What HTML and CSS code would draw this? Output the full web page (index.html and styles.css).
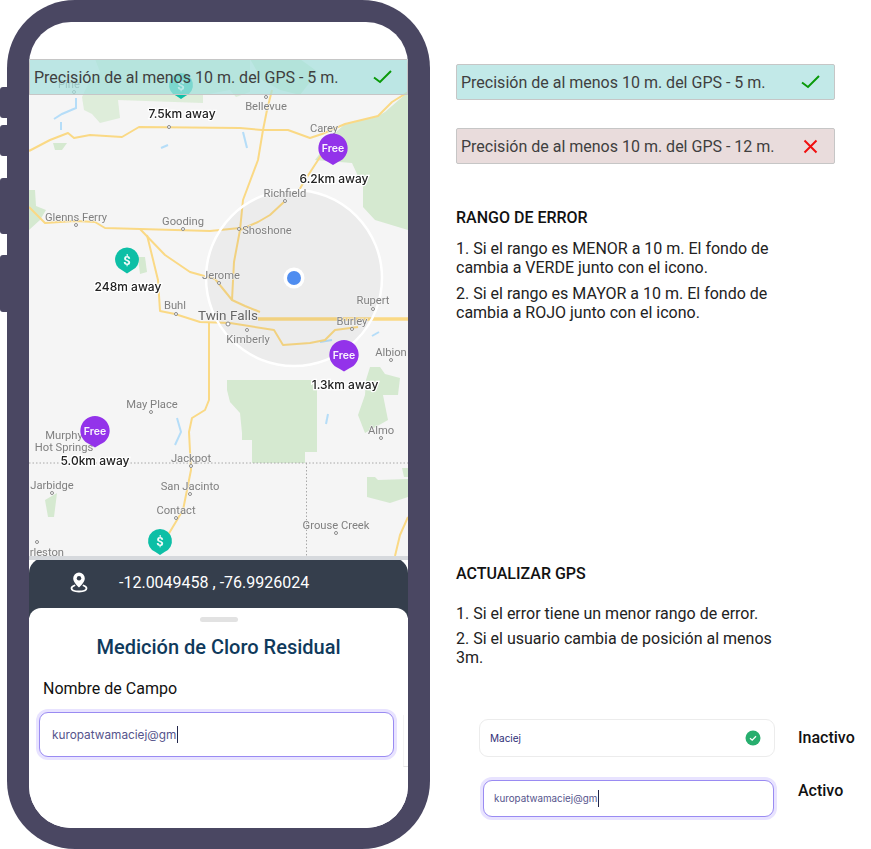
FILE: index.html
```html
<!DOCTYPE html>
<html lang="es">
<head>
<meta charset="utf-8">
<title>Precisión GPS</title>
<link rel="stylesheet" href="styles.css">
</head>
<body>
<div class="page">
  <section class="phone">
    <span class="side-btn side-a"></span>
    <span class="side-btn side-b"></span>
    <span class="side-btn side-c"></span>
    <span class="side-btn side-d"></span>
    <div class="screen">
      <div class="status-space"></div>
      <div class="map">
        <svg class="map-svg" viewBox="29 59 379 501" width="379" height="501">
          <rect x="29" y="59" width="379" height="501" fill="#f5f5f5"/>
          <g fill="#d5e9d0">
            <path d="M29 59H95L100 72L88 84L82 97L84 110L92 114L100 123L120 118L118 100L203 103V95L230 90L236 97L250 92V59Z" opacity=".75"/>
            <path d="M250 59H300L318 72L300 95L280 90L262 80Z"/>
            <path d="M408 92L385 112L378 116L345 124L335 133L315 160L352 163L363 187L363 207L375 220L408 230Z"/>
            <path d="M29 190H35L36 206L46 210L40 220L29 230Z"/>
            <path d="M53 143H67L62 150H55Z"/>
            <path d="M138 257H145L147 272L140 274Z"/>
            <path d="M227 380H317V452H305V463H252V440H242V433L240 413L230 402L227 390Z"/>
            <path d="M370 367H380L385 374L400 378L398 395H383L388 420L365 433L358 415L365 395L366 380Z"/>
            <path d="M367 477H375L378 480L408 479V497L390 503L367 497Z"/>
            <path d="M402 468H408V477H404Z"/>
            <path d="M45 500L57 493L54 517H48Z"/>
          </g>
          <g fill="none" stroke="#b5ddf8" stroke-width="2">
            <path d="M76 98L76 108L62 114L54 119"/>
            <path d="M61 122V130"/>
            <path d="M243 132L247 148"/>
            <path d="M161 148L168 145"/>
            <path d="M177 418L181 432L175 445"/>
            <path d="M328 414L326 424"/>
            <path d="M320 342L332 340M372 336L379 332"/>
          </g>
          <g fill="none" stroke="#fad985" stroke-width="2" stroke-linejoin="round">
            <path d="M29 151L50 140L68 133L74 138L90 135L122 137L139 127L240 128L262 130L288 130L310 138L322 134L345 124L378 116L392 102L408 92"/>
            <path d="M272 90L267 110L263 130L258 160L243 200L240 230L234 262L232 300"/>
            <path d="M29 207L45 223L75 221L95 222L105 228L140 229L210 231L240 228"/>
            <path d="M140 229L165 255L190 272L215 279L232 300L245 306L260 312"/>
            <path d="M147 235L158 280L160 311L175 314L200 322L230 323L274 330L283 345L310 343L325 340L335 330L358 327"/>
            <path d="M209 322V400L205 410L192 418L189 432L191 470L183 510L165 540"/>
            <path d="M408 517L400 535L395 556"/>
            <path d="M285 201L270 215L258 222L240 230"/>
            <path d="M322 154L305 180L298 192"/>
          </g>
          <path d="M258 319H408" fill="none" stroke="#fad985" stroke-width="3.500"/>
          <path d="M29 463H408M306.500 463V556" fill="none" stroke="#a8a8a8" stroke-width="1" stroke-dasharray="1.500 2"/>

          <circle cx="294" cy="278" r="88" fill="#000" fill-opacity=".035" stroke="#fff" stroke-width="2.500"/>

          <g fill="#fff" stroke="#8a8a8a" stroke-width="1">
            <circle cx="74" cy="92" r="1.500"/><circle cx="169" cy="127" r="1.500"/><circle cx="266" cy="97" r="1.500"/>
            <circle cx="285" cy="201" r="1.500"/><circle cx="76" cy="225" r="1.500"/><circle cx="183" cy="229" r="1.500"/>
            <circle cx="239" cy="229" r="1.500"/><circle cx="219" cy="283" r="1.500"/><circle cx="176" cy="314" r="1.500"/>
            <circle cx="228" cy="324" r="2"/><circle cx="247" cy="330" r="1.500"/><circle cx="373" cy="309" r="1.500"/>
            <circle cx="352" cy="329" r="1.500"/><circle cx="391" cy="360" r="1.500"/><circle cx="151" cy="412" r="1.500"/>
            <circle cx="381" cy="438" r="1.500"/><circle cx="191" cy="466" r="1.500"/><circle cx="52" cy="493" r="1.500"/>
            <circle cx="190" cy="494" r="1.500"/><circle cx="176" cy="518" r="1.500"/><circle cx="336" cy="533" r="1.500"/><circle cx="37" cy="542" r="1.500"/>
          </g>
          <g class="place">
            <text x="69" y="88">Pine</text>
            <text x="266" y="110">Bellevue</text>
            <text x="324" y="132">Carey</text>
            <text x="285" y="197">Richfield</text>
            <text x="76" y="221">Glenns Ferry</text>
            <text x="183" y="225">Gooding</text>
            <text x="267" y="234">Shoshone</text>
            <text x="221" y="279">Jerome</text>
            <text x="175" y="309">Buhl</text>
            <text x="373" y="304">Rupert</text>
            <text x="352" y="325">Burley</text>
            <text x="248" y="343">Kimberly</text>
            <text x="391" y="356">Albion</text>
            <text x="152" y="408">May Place</text>
            <text x="64" y="439">Murphy</text>
            <text x="64" y="451">Hot Springs</text>
            <text x="191" y="462">Jackpot</text>
            <text x="381" y="434">Almo</text>
            <text x="52" y="489">Jarbidge</text>
            <text x="190" y="490">San Jacinto</text>
            <text x="176" y="514">Contact</text>
            <text x="336" y="529">Grouse Creek</text>
            <text class="place-end" x="64" y="556">Charleston</text>
            <text class="place-big" x="228" y="320">Twin Falls</text>
          </g>

          <circle cx="294" cy="278" r="10.500" fill="#fff"/>
          <circle cx="294" cy="278" r="7" fill="#4f8df0"/>

          <g class="pin-free">
            <path d="M333 133.500a14.700 14.700 0 0 1 5 28.500l-5 3-5-3a14.700 14.700 0 0 1 5-28.500Z"/>
            <path d="M344 340a14.700 14.700 0 0 1 5 28.500l-5 3-5-3a14.700 14.700 0 0 1 5-28.500Z"/>
            <path d="M95 416a14.700 14.700 0 0 1 5 28.500l-5 3-5-3a14.700 14.700 0 0 1 5-28.500Z"/>
          </g>
          <g class="pin-paid">
            <path d="M181 73a12 12 0 0 1 4.500 23.100l-4.500 3-4.500-3a12 12 0 0 1 4.500-23.100Z"/>
            <path d="M127 247.500a12 12 0 0 1 4.500 23.100l-4.500 3-4.500-3a12 12 0 0 1 4.500-23.100Z"/>
            <path d="M160 529a12 12 0 0 1 4.500 23.100l-4.500 3-4.500-3a12 12 0 0 1 4.500-23.100Z"/>
          </g>
          <g class="pin-label">
            <text x="333" y="152">Free</text>
            <text x="344" y="358.500">Free</text>
            <text x="95" y="434.500">Free</text>
            <text class="dollar" x="181" y="90">$</text>
            <text class="dollar" x="127" y="264.500">$</text>
            <text class="dollar" x="160" y="546">$</text>
          </g>
          <g class="away">
            <text x="182" y="118">7.5km away</text>
            <text x="334" y="183">6.2km away</text>
            <text x="128" y="291">248m away</text>
            <text x="345" y="389">1.3km away</text>
            <text x="95" y="465">5.0km away</text>
          </g>
          <rect x="29" y="556" width="379" height="4" fill="#d6d9dd"/>
        </svg>
        <div class="banner banner-overlay">
          <span>Precisión de al menos 10 m. del GPS - 5 m.</span>
          <svg class="mark" width="19" height="14" viewBox="0 0 19 14"><path d="M1 7.500L7 12L18 1" fill="none" stroke="#0a9a0a" stroke-width="2"/></svg>
        </div>
      </div>
      <div class="coords">
        <svg class="coords-icon" width="18" height="22" viewBox="0 0 18 22">
          <path d="M9 1.500a5.800 5.800 0 0 0-5.800 5.800C3.200 11 7 14.500 9 16.500c2-2 5.800-5.500 5.800-9.200A5.800 5.800 0 0 0 9 1.500Z" fill="#fff"/>
          <circle cx="9" cy="7.300" r="2.200" fill="#353e4c"/>
          <path d="M4.500 14.500C2.500 15.200 1.500 16.200 1.500 17.300 1.500 19.200 5 20.500 9 20.500S16.500 19.200 16.500 17.300C16.500 16.200 15.500 15.200 13.500 14.500" fill="none" stroke="#fff" stroke-width="1.800" stroke-linecap="round"/>
        </svg>
        <span class="coords-text">-12.0049458 , -76.9926024</span>
      </div>
      <div class="sheet">
        <span class="handle"></span>
        <h1 class="sheet-title">Medición de Cloro Residual</h1>
        <p class="sheet-label">Nombre de Campo</p>
        <div class="field field-active field-phone"><span class="field-text field-text-phone">kuropatwamaciej@gm</span><span class="caret"></span></div>
        <span class="sheet-edge"></span>
      </div>
    </div>
  </section>

  <section class="notes">
    <div class="banner banner-ok">
      <span>Precisión de al menos 10 m. del GPS - 5 m.</span>
      <svg class="mark" width="19" height="14" viewBox="0 0 19 14"><path d="M1 7.500L7 12L18 1" fill="none" stroke="#0a9a0a" stroke-width="2"/></svg>
    </div>
    <div class="banner banner-bad">
      <span>Precisión de al menos 10 m. del GPS - 12 m.</span>
      <svg class="mark mark-x" width="15" height="15" viewBox="0 0 15 15"><path d="M1.500 1.500L13.500 13.500M13.500 1.500L1.500 13.500" fill="none" stroke="#f01010" stroke-width="2"/></svg>
    </div>

    <h2 class="note-title note-title-first">RANGO DE ERROR</h2>
    <p class="note-line note-line-top">1. Si el rango es MENOR a 10 m. El fondo de<br>cambia a VERDE junto con el icono.</p>
    <p class="note-line note-line-next">2. Si el rango es MAYOR a 10 m. El fondo de<br>cambia a ROJO junto con el icono.</p>

    <h2 class="note-title note-title-second">ACTUALIZAR GPS</h2>
    <p class="note-line note-line-gps">1. Si el error tiene un menor rango de error.</p>
    <p class="note-line note-line-next2">2. Si el usuario cambia de posición al menos<br>3m.</p>

    <div class="state-row state-row-first">
      <div class="field field-idle"><span class="field-text field-text-idle">Maciej</span>
        <svg class="ok-dot" width="16" height="16" viewBox="0 0 16 16"><circle cx="8" cy="8" r="7.500" fill="#27ae6e"/><path d="M5 8.200L7.200 10.200L11 6.300" fill="none" stroke="#fff" stroke-width="1.300"/></svg>
      </div>
      <span class="state-name">Inactivo</span>
    </div>
    <div class="state-row state-row-second">
      <div class="field field-active field-small"><span class="field-text field-text-small">kuropatwamaciej@gm</span><span class="caret"></span></div>
      <span class="state-name state-name-active">Activo</span>
    </div>
  </section>
</div>
</body>
</html>
```
FILE: styles.css
```css
* { box-sizing: border-box; }
html, body { margin: 0; padding: 0; background: #fff; }
body { font-family: Roboto, "Liberation Sans", sans-serif; color: #1a1a1a; }
.page { display: flex; width: 871px; height: 849px; overflow: hidden; }

.phone {
  position: relative;
  flex: none;
  width: 423px;
  height: 849px;
  margin-left: 7px;
  padding: 22px 22px 21px;
  background: #4a4762;
  border-radius: 68px;
}
.side-btn { position: absolute; left: -7px; width: 8px; background: #4a4762; border-radius: 3px 0 0 3px; }
.side-a { top: 87px; height: 31px; }
.side-b { top: 125px; height: 31px; }
.side-c { top: 178px; height: 56px; }
.side-d { top: 255px; height: 57px; }

.screen {
  display: flex;
  flex-direction: column;
  width: 379px;
  height: 806px;
  background: #fff;
  border-radius: 42px;
  overflow: hidden;
}
.status-space { flex: none; height: 37px; }

.map { position: relative; flex: none; height: 501px; }
.map-svg { display: block; filter: blur(.25px); }
.place text { font: 400 11.200px Roboto, sans-serif; fill: #808080; text-anchor: middle; paint-order: stroke; stroke: #f5f5f5; stroke-width: 1px; }
.place text.place-big { font-size: 13.500px; fill: #666; }
.place text.place-end { text-anchor: end; }
.pin-free { fill: #9333ea; }
.pin-paid { fill: #0dbfa6; }
.pin-label text { font: 600 10.500px Inter, Roboto, sans-serif; fill: #fff; text-anchor: middle; opacity: .95; }
.pin-label text.dollar { font: 700 13px Roboto, sans-serif; }
.away text { font: 500 12px Inter, Roboto, sans-serif; fill: #222; text-anchor: middle; paint-order: stroke; stroke: #fff; stroke-width: 2.500px; }

.banner {
  display: flex;
  align-items: center;
  justify-content: space-between;
  width: 379px;
  height: 36px;
  font-size: 16px;
  font-weight: 400;
  color: #3f3f3f;
  border: 1px solid #c6c6c6;
  border-radius: 2px;
}
.banner-overlay {
  position: absolute;
  left: 0;
  top: 0;
  padding: 0 15px 0 4px;
  background: rgba(166, 224, 222, .72);
  border-radius: 0;
}
.banner-ok { padding: 0 14px 0 4px; background: #c2e9e8; }
.banner-bad { margin-top: 28px; padding: 0 15px 0 4px; background: #e9dcdc; }
.mark { flex: none; }
.mark-x { margin-right: 1px; }

.coords {
  display: flex;
  align-items: flex-start;
  flex: none;
  height: 60px;
  margin-top: -2px;
  padding: 13px 0 0 41px;
  background: #353e4c;
  border-radius: 15px 15px 0 0;
}
.coords-text { margin: 1px 0 0 31px; font-size: 16px; line-height: 22px; color: #fff; }
.coords-icon { flex: none; }

.sheet {
  position: relative;
  flex: 1;
  margin-top: -10px;
  padding-top: 9px;
  background: #fff;
  border-radius: 12px 12px 0 0;
}
.handle { display: block; width: 38px; height: 5px; margin: 0 auto; background: #e2e2e2; border-radius: 3px; }
.sheet-title { margin: 13px 0 0; font-size: 20px; line-height: 24px; font-weight: 500; text-align: center; color: #0f3a5c; }
.sheet-label { margin: 19px 0 0 14px; font-size: 16px; line-height: 22px; color: #111; }
.sheet-edge { position: absolute; top: 107px; right: 0; width: 5px; height: 52px; border-left: 1px solid #f4f4f4; border-bottom: 1px solid #e4e4e4; }

.field { display: flex; align-items: center; background: #fff; border-radius: 9px; }
.field-active { border: 1.500px solid #9a8bf2; box-shadow: 0 0 0 3px #e8e3ff; }
.field-phone { width: 355px; height: 45px; margin: 12px 0 0 10px; padding-left: 12px; }
.field-small { width: 291px; height: 37px; padding-left: 10px; }
.field-idle { justify-content: space-between; width: 296px; height: 38px; padding: 0 13px 0 10px; border: 1px solid #ececec; }
.field-text { font-family: Inter, Roboto, sans-serif; font-weight: 400; color: #55548c; }
.field-text-phone { font-size: 11.800px; }
.field-text-small { font-size: 9.800px; }
.field-text-idle { font-size: 10px; color: #2f2f77; }
.caret { width: 1px; height: 17px; margin-left: 1px; background: #22264a; }

.notes { flex: none; width: 415px; margin-left: 26px; padding-top: 64px; }
.note-title { margin: 0; font-size: 16px; line-height: 20px; font-weight: 500; color: #111; }
.note-title-first { margin-top: 44px; }
.note-title-second { margin-top: 242px; }
.note-line { margin: 0; font-size: 16px; line-height: 19px; font-weight: 400; color: #222; }
.note-line-top { margin-top: 11px; }
.note-line-next { margin-top: 7px; }
.note-line-gps { margin-top: 20px; }
.note-line-next2 { margin-top: 6px; }
.state-row { display: flex; align-items: flex-start; gap: 23px; }
.state-row-first { margin-top: 52px; margin-left: 23px; }
.state-row-second { margin-top: 23px; margin-left: 27px; gap: 24px; }
.state-name { padding-top: 9px; font-size: 16px; line-height: 20px; font-weight: 500; color: #111; }
.state-name-active { padding-top: 1px; }
```
